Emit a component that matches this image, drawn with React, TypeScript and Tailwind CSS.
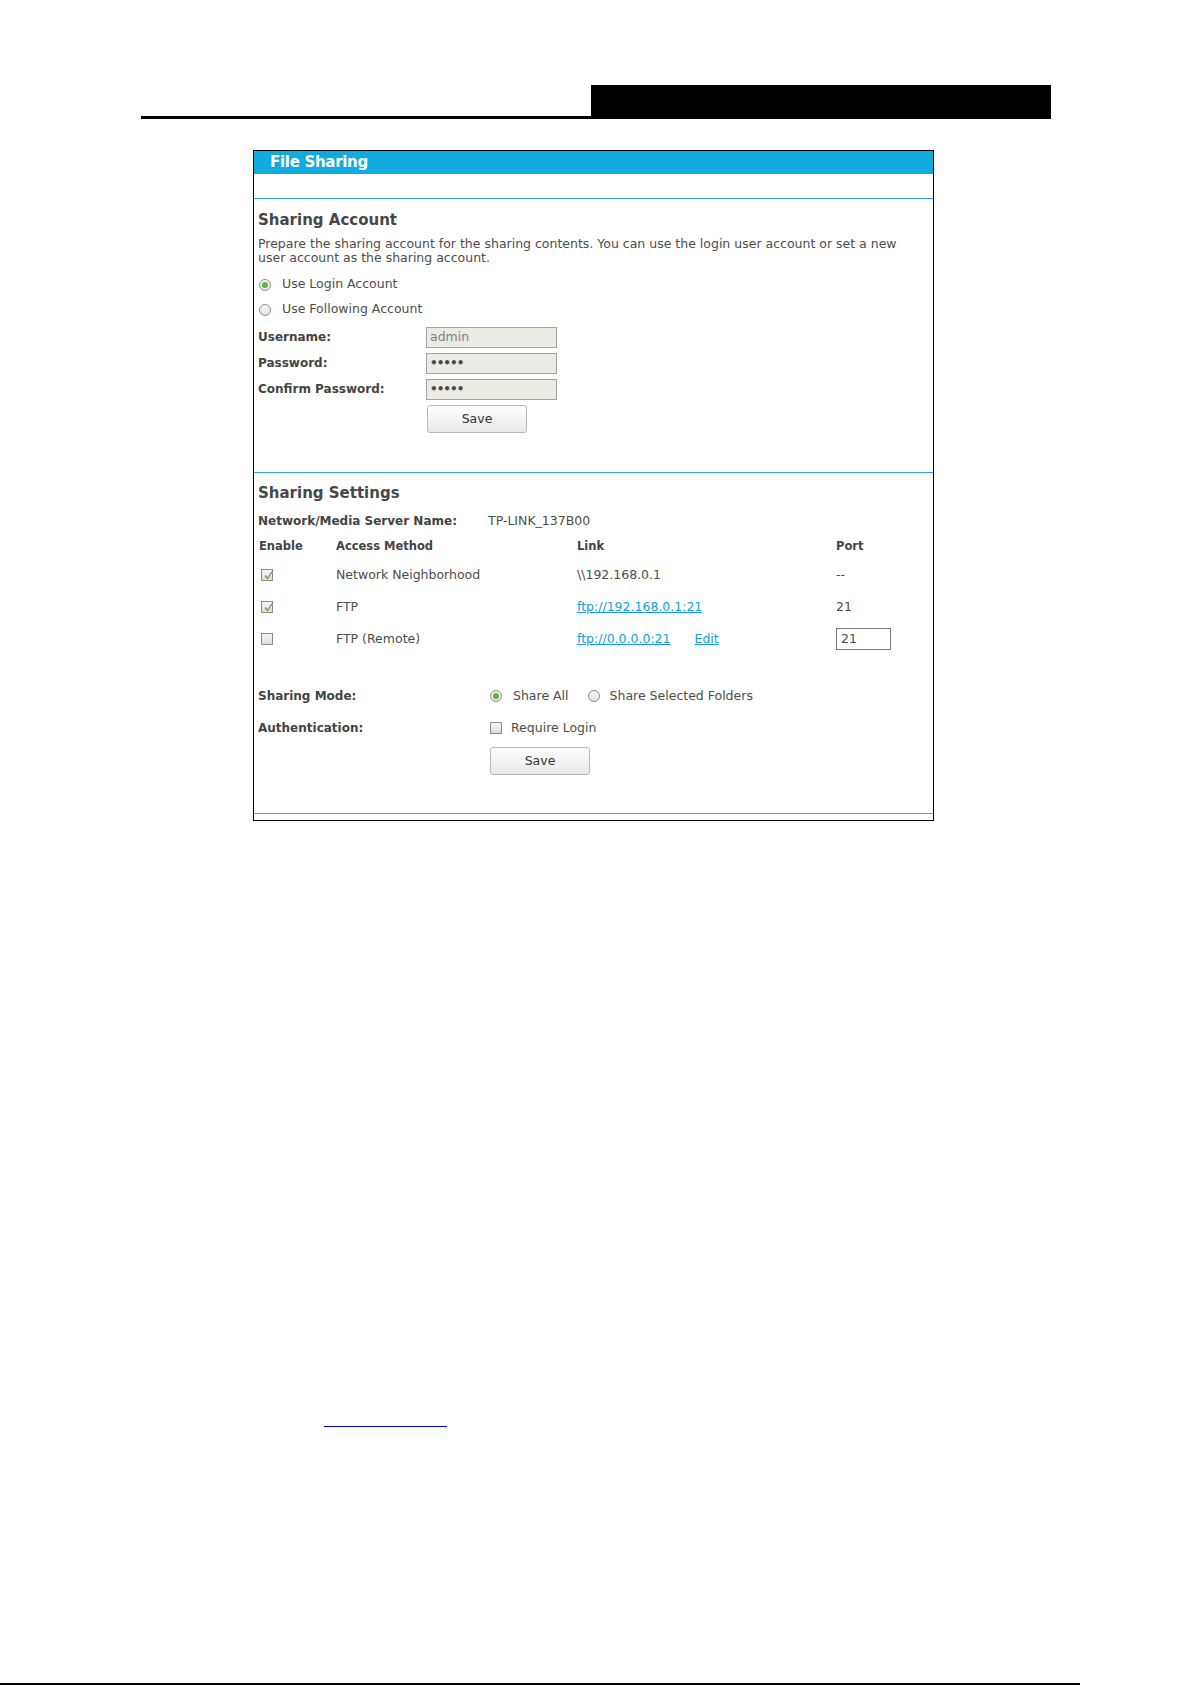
import React from 'react';

const font = { fontFamily: '"DejaVu Sans", Verdana, sans-serif' };

function Radio({ checked }: { checked?: boolean }) {
  return (
    <span className="flex h-[12px] w-[12px] shrink-0 items-center justify-center rounded-full border border-[#8d8d8d] bg-gradient-to-b from-[#f6f6f6] to-[#e2e2e2]">
      {checked && <span className="h-[6px] w-[6px] rounded-full bg-[#64b239]" />}
    </span>
  );
}

function Checkbox({ checked }: { checked?: boolean }) {
  return (
    <span className="relative flex h-[12px] w-[12px] shrink-0 items-center justify-center border border-[#8d8d8d] bg-gradient-to-b from-[#f6f6f6] to-[#dcdcdc]">
      {checked && (
        <svg viewBox="0 0 12 12" className="absolute left-[1px] top-[-1px] h-[12px] w-[12px]">
          <path d="M2 6.5 L4.5 9.5 L10 1.5" fill="none" stroke="#5aa536" strokeWidth="1.3" />
        </svg>
      )}
    </span>
  );
}

function SaveButton() {
  return (
    <button className="h-[28px] w-[100px] rounded-[3px] border border-[#b8b8b8] bg-gradient-to-b from-white to-[#e8e8e8] text-[12.5px] text-[#333]">
      Save
    </button>
  );
}

function Field({ label, value, muted }: { label: string; value: string; muted?: boolean }) {
  return (
    <div className="flex h-[26px] items-center">
      <span className="w-[168px] text-[12px] font-bold text-[#444]">{label}</span>
      <span
        className={
          'flex h-[21px] w-[131px] items-center border border-[#a3a3a3] bg-[#ebebe4] pl-[3px] ' +
          (muted ? 'text-[12.5px] text-[#808080]' : 'text-[12px] font-bold tracking-[-1px] text-[#4a4a4a]')
        }
      >
        {value}
      </span>
    </div>
  );
}

const rows = [
  { on: true, method: 'Network Neighborhood', link: '\\\\192.168.0.1', isLink: false, port: '--' },
  { on: true, method: 'FTP', link: 'ftp://192.168.0.1:21', isLink: true, port: '21' },
  { on: false, method: 'FTP (Remote)', link: 'ftp://0.0.0.0:21', isLink: true, port: '21', edit: true },
];

export default function App() {
  return (
    <div className="relative flex h-[1685px] w-[1192px] flex-col bg-white" style={font}>
      <div className="ml-[141px] mt-[85px] flex items-end">
        <div className="h-[3px] w-[450px] bg-black" />
        <div className="h-[34px] w-[460px] bg-black" />
      </div>

      <div className="ml-[253px] mt-[31px] w-[681px] border border-black text-[#4d4d4d]">
        <div className="flex h-[23px] items-center bg-[#12abe0] pl-[16px] text-[15px] font-bold tracking-[-0.3px] text-white">
          File Sharing
        </div>
        <div className="h-[24px]" />
        <div className="h-px bg-[#23aae2]" />

        <div className="pl-[4px]">
          <h2 className="mt-[11px] h-[20px] text-[15px] font-bold leading-[20px] text-[#474747]">Sharing Account</h2>
          <p className="mt-[7px] whitespace-nowrap text-[12.5px] leading-[14px]">
            Prepare the sharing account for the sharing contents. You can use the login user account or set a new
            <br />
            user account as the sharing account.
          </p>
          <div className="mt-[7px]">
            <div className="flex h-[25px] items-center gap-[11px] pl-[1px] text-[12.5px]">
              <Radio checked />
              <span>Use Login Account</span>
            </div>
            <div className="flex h-[25px] items-center gap-[11px] pl-[1px] text-[12.5px]">
              <Radio />
              <span>Use Following Account</span>
            </div>
          </div>
          <div className="mt-[2px]">
            <Field label="Username:" value="admin" muted />
            <Field label="Password:" value="•••••" />
            <Field label="Confirm Password:" value="•••••" />
          </div>
          <div className="ml-[169px] mt-[3px] mb-[39px]">
            <SaveButton />
          </div>
        </div>
        <div className="h-px bg-[#23aae2]" />

        <div className="pl-[4px]">
          <h2 className="mt-[10px] h-[20px] text-[15px] font-bold leading-[20px] text-[#474747]">Sharing Settings</h2>
          <div className="mt-[8px] flex h-[20px] items-center">
            <span className="w-[230px] text-[12px] font-bold text-[#444]">Network/Media Server Name:</span>
            <span className="text-[12.5px]">TP-LINK_137B00</span>
          </div>

          <div className="mt-[6px] grid h-[20px] grid-cols-[78px_241px_259px_1fr] items-center text-[11.5px] font-bold text-[#444]">
            <span className="pl-[1px]">Enable</span>
            <span>Access Method</span>
            <span>Link</span>
            <span>Port</span>
          </div>
          <div className="mt-[2px]">
            {rows.map((r) => (
              <div key={r.method} className="grid h-[32px] grid-cols-[78px_241px_259px_1fr] items-center text-[12.5px]">
                <span className="pl-[3px]">
                  <Checkbox checked={r.on} />
                </span>
                <span>{r.method}</span>
                <span className="flex gap-[24px]">
                  <span className={r.isLink ? 'text-[#149ddf] underline' : ''}>{r.link}</span>
                  {r.edit && <span className="text-[#149ddf] underline">Edit</span>}
                </span>
                {r.edit ? (
                  <span className="flex h-[22px] w-[55px] items-center border border-[#7a7a7a] pl-[4px]">{r.port}</span>
                ) : (
                  <span>{r.port}</span>
                )}
              </div>
            ))}
          </div>

          <div className="mt-[29px] flex h-[24px] items-center text-[12.5px]">
            <span className="w-[232px] text-[12px] font-bold text-[#444]">Sharing Mode:</span>
            <Radio checked />
            <span className="ml-[11px]">Share All</span>
            <span className="ml-[19px]">
              <Radio />
            </span>
            <span className="ml-[10px]">Share Selected Folders</span>
          </div>
          <div className="mt-[8px] flex h-[24px] items-center text-[12.5px]">
            <span className="w-[232px] text-[12px] font-bold text-[#444]">Authentication:</span>
            <Checkbox />
            <span className="ml-[9px]">Require Login</span>
          </div>
          <div className="ml-[232px] mt-[7px] mb-[38px]">
            <SaveButton />
          </div>
        </div>
        <div className="h-px bg-[#4aa5dc]" />
        <div className="h-[6px]" />
      </div>

      <div className="ml-[324px] mt-[605px] h-px w-[123px] bg-[#0000ff]" />

      <div className="mt-auto h-[2px] w-[1080px] bg-black" />
    </div>
  );
}
